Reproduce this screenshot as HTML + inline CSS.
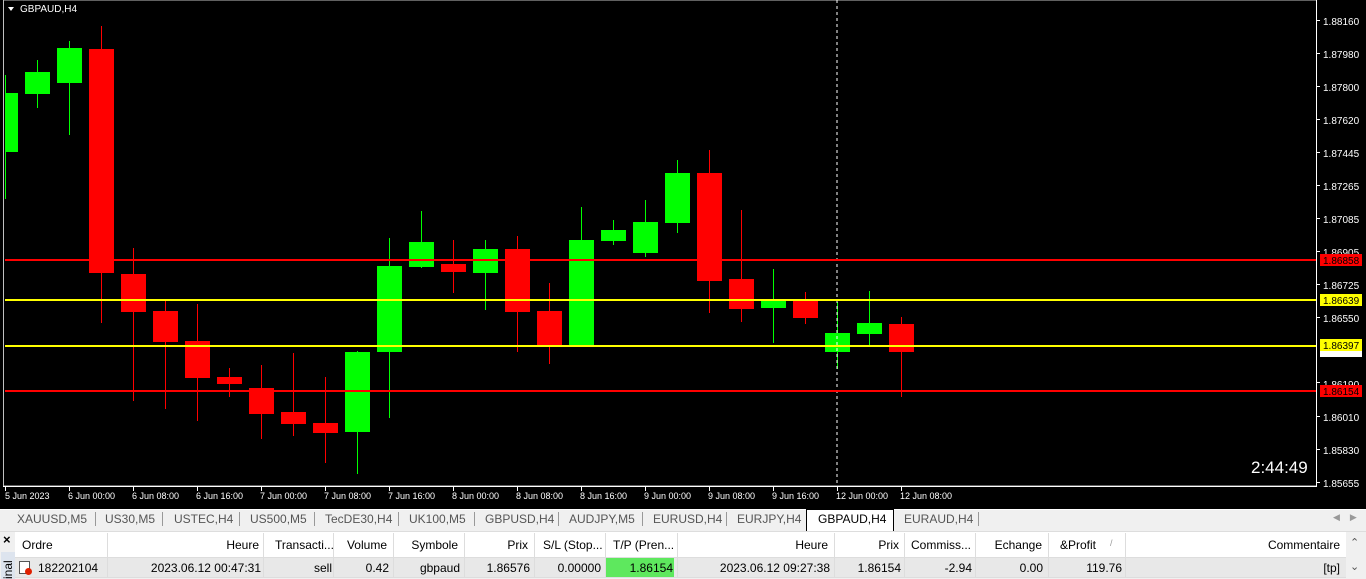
<!DOCTYPE html>
<html><head><meta charset="utf-8"><style>
*{margin:0;padding:0;box-sizing:border-box}
html,body{width:1366px;height:579px;overflow:hidden}
body{background:#f0f0f0;font-family:"Liberation Sans",sans-serif;position:relative}
.a{position:absolute;white-space:nowrap}
#chart{position:absolute;left:0;top:0;width:1366px;height:507px;background:#000}
.tab{position:absolute;top:512px;font-size:12px;color:#555}
.sep{position:absolute;top:512px;width:1px;height:14px;background:#999}
.h{position:absolute;top:538px;font-size:12px;color:#000}
.r{position:absolute;top:561px;font-size:12px;color:#000}
.cs{position:absolute;top:533px;width:1px;height:45px;background:#ddd}
</style></head><body>
<div id="chart">
<svg width="1366" height="507" style="position:absolute;left:0;top:0" font-family="Liberation Sans,sans-serif">
<rect x="3.5" y="0" width="1313" height="486" fill="none" stroke="#c0c0c0" stroke-width="1"/>
<rect x="1316" y="0" width="1" height="487" fill="#fff"/>
<rect x="3" y="486" width="1314" height="1" fill="#fff"/>
<g id="c"></g>
<line x1="837" y1="0" x2="837" y2="486" stroke="#fff" stroke-dasharray="3,3"/>
<rect x="5" y="259" width="1311" height="2" fill="#f00"/>
<rect x="5" y="299" width="1311" height="2" fill="#ff0"/>
<rect x="5" y="345" width="1311" height="2" fill="#ff0"/>
<rect x="5" y="390" width="1311" height="2" fill="#f00"/>
<path d="M8 7 L14 7 L11 11Z" fill="#fff"/>
<text x="20" y="12" font-size="10" fill="#fff">GBPAUD,H4</text>
<g font-size="10" fill="#fff">
<text x="1323" y="25">1.88160</text><text x="1323" y="58">1.87980</text><text x="1323" y="91">1.87800</text><text x="1323" y="124">1.87620</text><text x="1323" y="157">1.87445</text><text x="1323" y="190">1.87265</text><text x="1323" y="223">1.87085</text><text x="1323" y="256">1.86905</text><text x="1323" y="289">1.86725</text><text x="1323" y="322">1.86550</text><text x="1323" y="355">1.86368</text><text x="1323" y="388">1.86190</text><text x="1323" y="421">1.86010</text><text x="1323" y="454">1.85830</text><text x="1323" y="487">1.85655</text>
</g>
<g fill="#fff"><rect x="1317" y="20" width="3" height="1"/><rect x="1317" y="53" width="3" height="1"/><rect x="1317" y="86" width="3" height="1"/><rect x="1317" y="119" width="3" height="1"/><rect x="1317" y="152" width="3" height="1"/><rect x="1317" y="185" width="3" height="1"/><rect x="1317" y="218" width="3" height="1"/><rect x="1317" y="251" width="3" height="1"/><rect x="1317" y="284" width="3" height="1"/><rect x="1317" y="317" width="3" height="1"/><rect x="1317" y="382" width="3" height="1"/><rect x="1317" y="416" width="3" height="1"/><rect x="1317" y="449" width="3" height="1"/><rect x="1317" y="482" width="3" height="1"/></g>
<rect x="1320" y="347" width="42" height="10" fill="#fff"/>
<rect x="1320" y="254" width="42" height="12" fill="#f00"/><text x="1323" y="264" font-size="10" fill="#000">1.86858</text>
<rect x="1320" y="294" width="42" height="12" fill="#ff0"/><text x="1323" y="304" font-size="10" fill="#000">1.86639</text>
<rect x="1320" y="339" width="42" height="12" fill="#ff0"/><text x="1323" y="349" font-size="10" fill="#000">1.86397</text>
<rect x="1320" y="385" width="42" height="12" fill="#f00"/><text x="1323" y="395" font-size="10" fill="#000">1.86154</text>
<g font-size="9" fill="#fff">
<text x="5" y="499">5 Jun 2023</text><text x="68" y="499">6 Jun 00:00</text><text x="132" y="499">6 Jun 08:00</text><text x="196" y="499">6 Jun 16:00</text><text x="260" y="499">7 Jun 00:00</text><text x="324" y="499">7 Jun 08:00</text><text x="388" y="499">7 Jun 16:00</text><text x="452" y="499">8 Jun 00:00</text><text x="516" y="499">8 Jun 08:00</text><text x="580" y="499">8 Jun 16:00</text><text x="644" y="499">9 Jun 00:00</text><text x="708" y="499">9 Jun 08:00</text><text x="772" y="499">9 Jun 16:00</text><text x="836" y="499">12 Jun 00:00</text><text x="900" y="499">12 Jun 08:00</text>
</g>
<g fill="#fff"><rect x="5" y="487" width="1" height="4"/><rect x="69" y="487" width="1" height="4"/><rect x="133" y="487" width="1" height="4"/><rect x="197" y="487" width="1" height="4"/><rect x="261" y="487" width="1" height="4"/><rect x="325" y="487" width="1" height="4"/><rect x="389" y="487" width="1" height="4"/><rect x="453" y="487" width="1" height="4"/><rect x="517" y="487" width="1" height="4"/><rect x="581" y="487" width="1" height="4"/><rect x="645" y="487" width="1" height="4"/><rect x="709" y="487" width="1" height="4"/><rect x="773" y="487" width="1" height="4"/><rect x="837" y="487" width="1" height="4"/><rect x="901" y="487" width="1" height="4"/></g>
<text x="1251" y="473" font-size="17" fill="#fff">2:44:49</text>
</svg>
</div>
<div class="a" style="left:0;top:507px;width:1366px;height:2px;background:#000"></div>
<div class="a" style="left:0;top:509px;width:1366px;height:22px;background:#f0f0f0;border-top:1px solid #fff"></div>
<span class="tab" style="left:17px">XAUUSD,M5</span><span class="sep" style="left:95px"></span>
<span class="tab" style="left:105px">US30,M5</span><span class="sep" style="left:162px"></span>
<span class="tab" style="left:174px">USTEC,H4</span><span class="sep" style="left:239px"></span>
<span class="tab" style="left:250px">US500,M5</span><span class="sep" style="left:314px"></span>
<span class="tab" style="left:325px">TecDE30,H4</span><span class="sep" style="left:398px"></span>
<span class="tab" style="left:409px">UK100,M5</span><span class="sep" style="left:474px"></span>
<span class="tab" style="left:485px">GBPUSD,H4</span><span class="sep" style="left:558px"></span>
<span class="tab" style="left:569px">AUDJPY,M5</span><span class="sep" style="left:642px"></span>
<span class="tab" style="left:653px">EURUSD,H4</span><span class="sep" style="left:726px"></span>
<span class="tab" style="left:737px">EURJPY,H4</span>
<div class="a" style="left:806px;top:509px;width:88px;height:22px;background:#fff;border:1px solid #000;border-bottom:none"></div>
<span class="tab" style="left:818px;color:#000">GBPAUD,H4</span>
<span class="tab" style="left:904px">EURAUD,H4</span><span class="sep" style="left:978px"></span>
<span class="a" style="left:1333px;top:512px;font-size:9px;color:#999">◀&nbsp;&nbsp;&nbsp;&nbsp;▶</span>
<div class="a" style="left:0;top:531px;width:1366px;height:1px;background:#ddd"></div>
<div class="a" style="left:0;top:532px;width:15px;height:47px;background:#f0f0f0;overflow:hidden"></div>
<span class="a" style="left:3px;top:532px;font-size:13px;font-weight:bold">×</span>
<div class="a" style="left:1px;top:552px;width:14px;height:27px;background:#dde4ee;overflow:hidden"><span class="a" style="font-size:12px;transform:rotate(-90deg);transform-origin:left top;top:27px;left:0">inal</span></div>
<div class="a" style="left:15px;top:532px;width:1331px;height:25px;background:#fff"></div>
<div class="a" style="left:15px;top:557px;width:1331px;height:21px;background:#e8e8e8;border-top:1px solid #ddd;border-bottom:1px solid #ddd"></div>
<div class="a" style="left:1346px;top:532px;width:20px;height:47px;background:#f0f0f0"></div>
<span class="a" style="left:1350px;top:536px;font-size:11px;color:#555">⌃</span>
<span class="a" style="left:1350px;top:560px;font-size:11px;color:#555">⌄</span>
<div class="cs" style="left:107px"></div><div class="cs" style="left:263px"></div><div class="cs" style="left:333px"></div><div class="cs" style="left:393px"></div><div class="cs" style="left:464px"></div><div class="cs" style="left:534px"></div><div class="cs" style="left:605px"></div><div class="cs" style="left:677px"></div><div class="cs" style="left:834px"></div><div class="cs" style="left:904px"></div><div class="cs" style="left:975px"></div><div class="cs" style="left:1048px"></div><div class="cs" style="left:1125px"></div>
<span class="h" style="left:22px">Ordre</span>
<span class="h" style="right:1107px">Heure</span>
<span class="h" style="left:275px">Transacti...</span>
<span class="h" style="right:979px">Volume</span>
<span class="h" style="right:908px">Symbole</span>
<span class="h" style="right:838px">Prix</span>
<span class="h" style="left:543px">S/L (Stop...</span>
<span class="h" style="left:613px">T/P (Pren...</span>
<span class="h" style="right:538px">Heure</span>
<span class="h" style="right:467px">Prix</span>
<span class="h" style="left:911px">Commiss...</span>
<span class="h" style="right:324px">Echange</span>
<span class="h" style="left:1060px">&amp;Profit</span><span class="h" style="left:1110px;color:#999;font-size:9px">/</span>
<span class="h" style="right:26px">Commentaire</span>
<div class="a" style="left:19px;top:561px;width:11px;height:13px;border:1px solid #555;background:#fff"></div>
<div class="a" style="left:25px;top:568px;width:7px;height:7px;border-radius:50%;background:#e02000"></div>
<span class="r" style="left:38px">182202104</span>
<span class="r" style="right:1105px">2023.06.12 00:47:31</span>
<span class="r" style="right:1034px">sell</span>
<span class="r" style="right:977px">0.42</span>
<span class="r" style="right:906px">gbpaud</span>
<span class="r" style="right:836px">1.86576</span>
<span class="r" style="right:765px">0.00000</span>
<div class="a" style="left:606px;top:558px;width:68px;height:19px;background:#5ee85e"></div>
<span class="r" style="right:693px">1.86154</span>
<span class="r" style="right:536px">2023.06.12 09:27:38</span>
<span class="r" style="right:465px">1.86154</span>
<span class="r" style="right:394px">-2.94</span>
<span class="r" style="right:323px">0.00</span>
<span class="r" style="right:244px">119.76</span>
<span class="r" style="right:26px">[tp]</span>
<script>
var d=[[5,1,93,152,75,199,13],[37,1,72,94,60,108],[69,1,48,83,41,135],[101,0,49,273,26,323],[133,0,274,312,248,401],[165,0,311,342,300,409],[197,0,341,378,304,421],[229,0,377,384,368,397],[261,0,388,414,365,439],[293,0,412,424,353,436],[325,0,423,433,377,463],[357,1,352,432,351,474],[389,1,266,352,238,418],[421,1,242,267,211,268],[453,0,264,272,240,293],[485,1,249,273,240,310],[517,0,249,312,236,352],[549,0,311,346,283,364],[581,1,240,346,207,347],[613,1,230,241,220,245],[645,1,222,253,200,257],[677,1,173,223,160,233],[709,0,173,281,150,313],[741,0,279,309,210,322],[773,1,300,308,269,343],[805,0,300,318,292,324],[837,1,333,352,302,369],[869,1,323,334,291,347],[901,0,324,352,317,397]];
var s='';d.forEach(function(c){var col=c[1]?'#0f0':'#f00';var w=c[6]||25;var x=c[6]?5:c[0]-12;s+='<rect x="'+c[0]+'" y="'+c[4]+'" width="1" height="'+(c[5]-c[4])+'" fill="'+col+'"/><rect x="'+x+'" y="'+c[2]+'" width="'+w+'" height="'+(c[3]-c[2])+'" fill="'+col+'"/>';});
document.getElementById('c').innerHTML=s;
</script>
</body></html>
